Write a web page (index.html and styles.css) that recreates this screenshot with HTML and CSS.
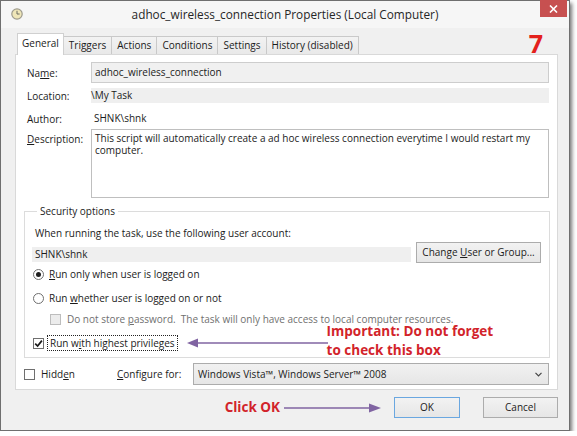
FILE: index.html
```html
<!DOCTYPE html>
<html>
<head>
<meta charset="utf-8">
<link rel="stylesheet" href="styles.css">
</head>
<body>
<div class="window">
  <div class="titlebar">
    <svg class="app-icon" width="12" height="12" viewBox="0 0 12 12">
      <circle cx="6" cy="6" r="5.2" fill="#efe6b8" stroke="#9d9a8c" stroke-width="1.2"/>
      <path d="M6 2.8 V6 H8.6" fill="none" stroke="#6b6a60" stroke-width="1"/>
    </svg>
    <div class="title">adhoc_wireless_connection Properties (Local Computer)</div>
    <div class="close">
      <svg width="9" height="8" viewBox="0 0 9 8"><path d="M1 0.5 L8 7.5 M8 0.5 L1 7.5" stroke="#fff" stroke-width="1.6"/></svg>
    </div>
  </div>
  <div class="client">
    <div class="tabstrip">
      <div class="tab active">General</div>
      <div class="tab">Triggers</div>
      <div class="tab">Actions</div>
      <div class="tab">Conditions</div>
      <div class="tab">Settings</div>
      <div class="tab">History (disabled)</div>
      <div class="step">7</div>
    </div>
    <div class="panel">
      <div class="row row-name">
        <span class="label">Na<u>m</u>e:</span>
        <div class="field input">adhoc_wireless_connection</div>
      </div>
      <div class="row row-loc">
        <span class="label">Location:</span>
        <div class="field band">\My Task</div>
      </div>
      <div class="row row-author">
        <span class="label">Author:</span>
        <div class="field plain">SHNK\shnk</div>
      </div>
      <div class="row row-desc">
        <span class="label"><u>D</u>escription:</span>
        <div class="field textarea">This script will automatically create a ad hoc wireless connection everytime I would restart my computer.</div>
      </div>
      <fieldset class="group">
        <legend>Security options</legend>
        <div class="intro">When running the task, use the following user account:</div>
        <div class="account-row">
          <div class="account">SHNK\shnk</div>
          <div class="btn change">Change <u>U</u>ser or Group...</div>
        </div>
        <div class="opt opt-first"><span class="radio checked"></span><span><u>R</u>un only when user is logged on</span></div>
        <div class="opt opt-second"><span class="radio"></span><span>Run <u>w</u>hether user is logged on or not</span></div>
        <div class="opt opt-sub disabled"><span class="check"></span><span>Do not store <u>p</u>assword.&nbsp; The task will only have access to local computer resources.</span></div>
        <div class="opt opt-priv">
          <span class="check">
            <svg width="9" height="9" viewBox="0 0 9 9"><path d="M1.2 4.6 L3.6 7 L7.9 1.6" fill="none" stroke="#1a1a1a" stroke-width="1.7"/></svg>
          </span>
          <span class="focus">Run w<u>i</u>th highest privileges</span>
          <svg class="arrow-left" width="141" height="10" viewBox="0 0 141 10"><path d="M10 5 H141" stroke="#8064a2" stroke-width="1.6"/><path d="M0 5 L11 0.5 L11 9.5 Z" fill="#8064a2"/></svg>
          <div class="note note-two">Important: Do not forget<br>to check this box</div>
        </div>
      </fieldset>
      <div class="row row-bottom">
        <span class="check"></span>
        <span class="hidden-label">Hidd<u>e</u>n</span>
        <span class="cfg-label"><u>C</u>onfigure for:</span>
        <div class="select">
          <span>Windows Vista™, Windows Server™ 2008</span>
          <svg width="7" height="5" viewBox="0 0 7 5"><path d="M0.5 0.8 L3.5 3.8 L6.5 0.8" fill="none" stroke="#444" stroke-width="1.2"/></svg>
        </div>
      </div>
    </div>
    <div class="buttons">
      <span class="note">Click OK</span>
      <svg class="arrow-right" width="97" height="10" viewBox="0 0 97 10"><path d="M0 5 H86" stroke="#8064a2" stroke-width="1.6"/><path d="M97 5 L85 0.5 L85 9.5 Z" fill="#8064a2"/></svg>
      <div class="btn ok">OK</div>
      <div class="btn cancel">Cancel</div>
    </div>
  </div>
</div>
</body>
</html>
```

FILE: styles.css
```css
* { box-sizing: border-box; }

body {
  margin: 0;
  background: #ffffff;
  font-family: "Open Sans", "Noto Sans", sans-serif;
  font-size: 10px;
  color: #1b1b1b;
}

u { text-decoration-thickness: 1px; text-underline-offset: 1px; }

.window {
  width: 570px;
  height: 431px;
  border: 1px solid #6f6f6f;
  background: #f0f0f0;
  box-shadow: 2px 3px 4px rgba(0, 0, 0, 0.55);
  display: flex;
  flex-direction: column;
}

.titlebar {
  height: 27px;
  background: #f6f6f6;
  display: grid;
  grid-template-columns: 1fr auto 1fr;
  align-items: start;
}

.app-icon { margin: 7px 0 0 10px; }

.title {
  font-size: 11.8px;
  line-height: 26px;
  color: #262626;
  white-space: nowrap;
}

.close {
  justify-self: end;
  width: 27px;
  height: 17px;
  margin-right: 2px;
  margin-top: -1px;
  background: #c75050;
  display: flex;
  align-items: center;
  justify-content: center;
}

.client {
  flex: 1;
  padding: 5px 11px 0 14px;
  display: flex;
  flex-direction: column;
}

.tabstrip {
  height: 21px;
  display: flex;
  align-items: flex-end;
  padding-left: 2px;
}

.tab {
  height: 18px;
  line-height: 16px;
  padding: 0 5px;
  border: 1px solid #c9c9c9;
  border-bottom: none;
  margin-left: -1px;
  background: linear-gradient(#f2f2f2, #e9e9e9);
  white-space: nowrap;
}

.tab.active {
  height: 22px;
  margin-bottom: -1px;
  line-height: 19px;
  background: #fff;
  border-color: #d0d0d0;
  position: relative;
  z-index: 1;
  margin-left: 0;
  padding: 0 4px;
}

.step {
  margin-left: auto;
  margin-right: 15px;
  align-self: stretch;
  font-size: 25px;
  line-height: 21px;
  font-weight: 700;
  color: #e3201b;
}

.panel {
  background: #fff;
  border: 1px solid #d9d9d9;
  padding: 7px 8px 4px 11px;
  display: flex;
  flex-direction: column;
}

.row { display: flex; align-items: center; }

.label { width: 64px; flex: none; line-height: 14px; }

.field { flex: 1; white-space: nowrap; }

.input {
  height: 21px;
  line-height: 19px;
  border: 1px solid #cdcdcd;
  background: #f0f0f0;
  padding-left: 3px;
}

.row-loc { margin-top: 5px; }
.band {
  height: 15px;
  line-height: 15px;
  background: #efefef;
  padding-left: 0;
}

.row-author { margin-top: 8px; }
.plain { line-height: 15px; padding-left: 3px; }

.row-desc { margin-top: 3px; align-items: flex-start; }
.row-desc .label { padding-top: 3px; }
.textarea {
  height: 69px;
  border: 1px solid #bfbfbf;
  background: #fff;
  padding: 2px 3px;
  line-height: 12px;
  white-space: normal;
}

.group {
  margin: 6px -1px 0 -3px;
  padding: 0 8px 6px 7px;
  border: 1px solid #dcdcdc;
  min-width: 0;
}

.group legend {
  margin-left: 5px;
  padding: 0 3px;
  line-height: 14px;
}

.intro { margin: 8px 0 0 3px; line-height: 14px; }

.account-row {
  display: flex;
  align-items: flex-end;
  gap: 5px;
  margin-top: 2px;
}

.account {
  flex: 1;
  height: 15px;
  line-height: 15px;
  background: #efefef;
  padding-left: 3px;
  margin-bottom: 1px;
}

.btn {
  height: 21px;
  line-height: 19px;
  border: 1px solid #acacac;
  background: linear-gradient(#f2f2f2, #e6e6e6);
  text-align: center;
  white-space: nowrap;
}

.change { width: 125px; }

.opt {
  display: flex;
  align-items: center;
  height: 16px;
  line-height: 14px;
}
.opt-first { margin-top: 3px; }
.opt-second { margin-top: 8px; }
.opt-sub { margin-top: 5px; padding-left: 18px; }
.opt-priv { margin-top: 8px; }

.radio {
  width: 11px;
  height: 11px;
  border: 1px solid #6f6f6f;
  border-radius: 50%;
  background: #fff;
  margin: 0 5px 0 1px;
  display: flex;
  align-items: center;
  justify-content: center;
  flex: none;
}
.radio.checked::after {
  content: "";
  width: 5px;
  height: 5px;
  border-radius: 50%;
  background: #1f1f1f;
}

.check {
  width: 11px;
  height: 11px;
  border: 1px solid #6f6f6f;
  background: #fff;
  flex: none;
  display: flex;
  align-items: center;
  justify-content: center;
}

.opt-sub .check { margin-right: 6px; border-color: #bdbdbd; background: #ececec; }
.disabled { color: #707070; }

.opt-priv .check { margin: 0 3px 0 1px; }

.focus {
  border: 1px dotted #222;
  padding: 0 2px;
  line-height: 14px;
}

.arrow-left { margin-left: 9px; flex: none; }

.note {
  color: #d2232a;
  font-weight: 700;
  font-size: 13.5px;
  line-height: 19px;
  white-space: nowrap;
}

.note-two { margin: -21px 0 -16px -1px; }

.row-bottom { margin-top: 5px; }
.row-bottom .check { margin-left: -3px; }
.hidden-label { width: 82px; padding-left: 6px; }
.cfg-label { width: 76px; }

.select {
  flex: 1;
  height: 22px;
  border: 1px solid #acacac;
  background: linear-gradient(#f1f1f1, #e6e6e6);
  display: flex;
  align-items: center;
  justify-content: space-between;
  padding: 0 6px 0 4px;
  white-space: nowrap;
}

.buttons {
  display: flex;
  align-items: center;
  justify-content: flex-end;
  margin-top: 7px;
}

.buttons .note { line-height: 21px; }
.arrow-right { margin: 0 13px 0 4px; }

.ok { width: 66px; border-color: #6aa7e0; margin-right: 23px; }
.cancel { width: 75px; }
```
